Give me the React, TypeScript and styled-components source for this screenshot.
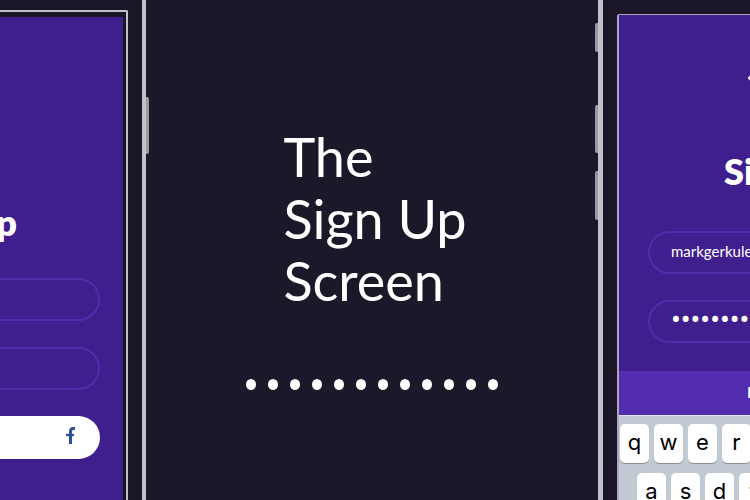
import React from "react";
import styled, { createGlobalStyle } from "styled-components";

const colors = {
  ink: "#1c1729",
  bezel: "#1a1527",
  metal: "#c3c0c9",
  metalDark: "#9b99a0",
  screen: "#3f1e8d",
  outline: "#512cab",
  bar: "#532cb0",
  keyboard: "#c1cad3",
};

const GlobalStyle = createGlobalStyle`
  *, *::before, *::after { box-sizing: border-box; }
  body { margin: 0; background: ${colors.ink}; }
  button, input { font: inherit; margin: 0; }
`;

const Page = styled.main`
  display: grid;
  grid-template-columns: 149px minmax(0, 1fr) 155px;
  height: 100vh;
  min-height: 400px;
  overflow: hidden;
  background: ${colors.ink};
  color: #fff;
  font-family: Lato, "Open Sans", sans-serif;
`;

const Phone = styled.section<{ $side: "left" | "right" }>`
  display: flex;
  flex-direction: ${(p) => (p.$side === "left" ? "row" : "row-reverse")};
  min-width: 0;
  overflow: hidden;
`;

const Bezel = styled.div<{ $side: "left" | "right" }>`
  flex: 1;
  min-width: 0;
  display: flex;
  padding: ${(p) => (p.$side === "left" ? "10px 14px 0 0" : "14px 0 0 14px")};
  background: ${colors.bezel};
`;

const Rail = styled.div<{ $width: number }>`
  flex: 0 0 ${(p) => p.$width}px;
  background: ${colors.metal};
`;

const SideButtons = styled.div<{ $top: number }>`
  flex: 0 0 3px;
  display: flex;
  flex-direction: column;
  gap: 18px;
  padding-top: ${(p) => p.$top}px;
`;

const SideButton = styled.i<{ $height: number; $after?: number; $side: "left" | "right" }>`
  height: ${(p) => p.$height}px;
  margin-bottom: ${(p) => p.$after ?? 0}px;
  background: ${colors.metalDark};
  border-radius: ${(p) => (p.$side === "left" ? "0 2px 2px 0" : "2px 0 0 2px")};
`;

const LeftGlass = styled.div`
  flex: 1;
  min-width: 0;
  display: flex;
  padding: 5px 3px 0 0;
  border: solid ${colors.metal};
  border-width: 2px 2px 0 0;
  border-top-right-radius: 2px;
`;

const LeftScreen = styled.div`
  flex: 1;
  min-width: 0;
  display: flex;
  flex-direction: column;
  align-items: flex-end;
  padding: 183px 23px 0 0;
  overflow: hidden;
  background: ${colors.screen};
`;

const RightScreen = styled.div`
  flex: 1;
  min-width: 0;
  display: flex;
  flex-direction: column;
  overflow: hidden;
  border: solid #aba3bd;
  border-width: 1px 0 0 2px;
  border-top-left-radius: 2px;
  background: ${colors.screen};
`;

const Heading = styled.h2<{ $inset?: number }>`
  margin: 0 ${(p) => p.$inset ?? 0}px 0 0;
  font-size: 36px;
  line-height: 44px;
  font-weight: 800;
  white-space: nowrap;
`;

const Field = styled.input`
  flex: none;
  width: 260px;
  height: 43px;
  padding: 0 21px 4px;
  border: 2px solid ${colors.outline};
  border-radius: 22px;
  outline: 0;
  background: transparent;
  color: #fff;
  font-size: 15px;
  line-height: 20px;
`;

const LeftFields = styled.div`
  display: flex;
  flex-direction: column;
  align-items: flex-end;
  gap: 26px;
  padding-top: 34px;
`;

const FacebookButton = styled.button`
  display: flex;
  align-items: center;
  justify-content: flex-end;
  width: 260px;
  height: 43px;
  padding: 0 25px 4px;
  border: 0;
  border-radius: 22px;
  background: #fff;
  color: #30519a;
`;

const Hero = styled.section`
  display: flex;
  flex-direction: column;
  align-items: center;
  padding-top: 126px;
`;

const HeroTitle = styled.h1`
  margin: 0;
  padding-left: 6px;
  font-size: 54px;
  line-height: 62px;
  font-weight: 400;
`;

const Dots = styled.div`
  display: flex;
  justify-content: space-between;
  width: 253px;
  margin-top: 67px;
`;

const Dot = styled.i`
  width: 10px;
  height: 11px;
  border-radius: 50%;
  background: #fff;
`;

const Form = styled.form`
  display: flex;
  flex-direction: column;
  gap: 26px;
  padding: 38px 0 28px 29px;
`;

const BackRow = styled.div`
  display: flex;
  padding: 60px 0 0 129px;
`;

const BackButton = styled.button`
  display: flex;
  padding: 0;
  border: 0;
  background: none;
  color: #fff;
`;

const TitleRow = styled.div`
  padding: 68px 0 0 105px;
`;

const NextBar = styled.button`
  flex: none;
  height: 44px;
  padding: 0 0 2px 128px;
  border: 0;
  background: ${colors.bar};
  color: #fff;
  font-size: 16px;
  line-height: 20px;
  font-weight: 700;
  text-align: left;
`;

const Keyboard = styled.div`
  flex: 1;
  display: flex;
  flex-direction: column;
  gap: 10px;
  padding: 8px 0 0 1px;
  border-top: 1px solid #dde3ee;
  background: ${colors.keyboard};
`;

const KeyRow = styled.div<{ $indent?: number }>`
  display: flex;
  gap: 5px;
  padding-left: ${(p) => p.$indent ?? 0}px;
`;

const Key = styled.button`
  flex: 0 0 29px;
  height: 39px;
  padding: 0 0 3px;
  border: 0;
  border-radius: 5px;
  background: #fff;
  box-shadow: 0 1px 0 #8b9096;
  color: #000;
  font-family: Inter, "Liberation Sans", sans-serif;
  font-size: 22px;
  line-height: 28px;
`;

const Password = styled(Field)`
  font-family: Roboto, sans-serif;
  font-size: 29px;
`;

const FacebookMark = () => (
  <svg width="9" height="17" viewBox="0 0 9 17" fill="none" stroke="currentColor" strokeWidth="3">
    <path d="M4.5 17V4.5Q4.5 1.5 7 1.5H9" />
    <path d="M0 8H8" strokeWidth="2.4" />
  </svg>
);

const BackMark = () => (
  <svg width="12" height="6" viewBox="0 0 12 6" fill="none" stroke="currentColor" strokeWidth="2">
    <path d="M4 0L1 3L4 6M1 3H12" />
  </svg>
);

export default function App() {
  return (
    <>
      <GlobalStyle />
      <Page>
        <Phone $side="left">
          <Bezel $side="left">
            <LeftGlass>
              <LeftScreen>
                <Heading $inset={83}>Sign Up</Heading>
                <LeftFields>
                  <Field aria-label="Email" type="email" />
                  <Field aria-label="Password" type="password" />
                  <FacebookButton type="button" aria-label="Sign up with Facebook">
                    <FacebookMark />
                  </FacebookButton>
                </LeftFields>
              </LeftScreen>
            </LeftGlass>
          </Bezel>
          <Rail $width={4} />
          <SideButtons $top={97}>
            <SideButton $side="left" $height={57} />
          </SideButtons>
        </Phone>

        <Hero>
          <HeroTitle>
            The
            <br />
            Sign Up
            <br />
            Screen
          </HeroTitle>
          <Dots>
            {Array.from({ length: 12 }, (_, i) => (
              <Dot key={i} />
            ))}
          </Dots>
        </Hero>

        <Phone $side="right">
          <Bezel $side="right">
            <RightScreen>
              <BackRow>
                <BackButton type="button" aria-label="Back">
                  <BackMark />
                </BackButton>
              </BackRow>
              <TitleRow>
                <Heading>Sign Up</Heading>
              </TitleRow>
              <Form>
                <Field aria-label="Email" type="text" defaultValue="markgerkule" />
                <Password aria-label="Password" type="password" defaultValue="signup123" />
              </Form>
              <NextBar type="button">Next</NextBar>
              <Keyboard>
                <KeyRow>
                  {["q", "w", "e", "r"].map((k) => (
                    <Key type="button" key={k}>{k}</Key>
                  ))}
                </KeyRow>
                <KeyRow $indent={17}>
                  {["a", "s", "d", "f"].map((k) => (
                    <Key type="button" key={k}>{k}</Key>
                  ))}
                </KeyRow>
              </Keyboard>
            </RightScreen>
          </Bezel>
          <Rail $width={5} />
          <SideButtons $top={23}>
            <SideButton $side="right" $height={29} $after={35} />
            <SideButton $side="right" $height={48} />
            <SideButton $side="right" $height={49} />
          </SideButtons>
        </Phone>
      </Page>
    </>
  );
}
